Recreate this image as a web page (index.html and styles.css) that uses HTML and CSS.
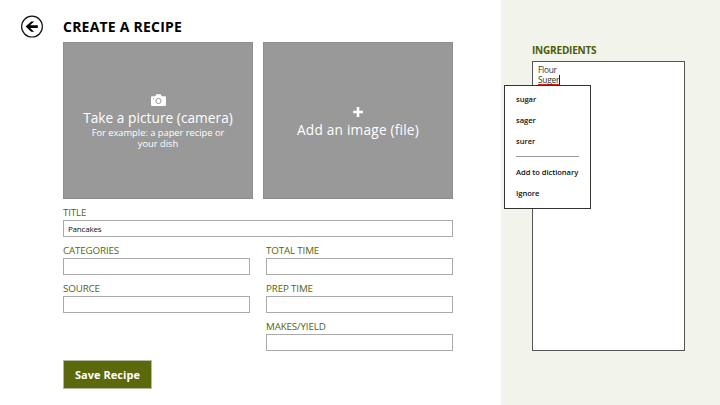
FILE: index.html
```html
<!DOCTYPE html>
<html lang="en">
<head>
<meta charset="utf-8">
<title>Create a recipe</title>
<link rel="stylesheet" href="styles.css">
</head>
<body>
<div class="app">
  <main class="main">
    <header class="header">
      <svg class="back" viewBox="0 0 24 24" width="24" height="24" role="img" aria-label="Back">
        <circle cx="12" cy="11.6" r="10.4" fill="none" stroke="#111" stroke-width="1.2"/>
        <path d="M5.6 11.6 11.2 6.4H14.2L10.1 10.3H17.8V12.9H10.1L14.2 16.8H11.2Z" fill="#000"/>
      </svg>
      <h1 class="page-title">CREATE A RECIPE</h1>
    </header>
    <section class="tiles">
      <div class="tile">
        <svg class="camera" viewBox="0 0 15 13" width="15" height="13">
          <path d="M1.2 2.2H4.3L5.2 .2H9.8L10.7 2.2H13.8Q15 2.2 15 3.4V10.8Q15 12 13.8 12H1.2Q0 12 0 10.8V3.4Q0 2.2 1.2 2.2Z" fill="#fff"/>
          <circle cx="7.5" cy="7" r="2.6" fill="none" stroke="#999" stroke-width="1"/>
          <circle cx="2.6" cy="4.5" r=".6" fill="#999"/>
        </svg>
        <div class="tile-title">Take a picture (camera)</div>
        <div class="tile-note">For example: a paper recipe or</div>
        <div class="tile-note">your dish</div>
      </div>
      <div class="tile tile-file">
        <svg class="plus" viewBox="0 0 10 10" width="10" height="10"><path d="M5 0V10M0 5H10" stroke="#fff" stroke-width="2.6"/></svg>
        <div class="tile-title file-title">Add an image (file)</div>
      </div>
    </section>
    <form class="fields">
      <div class="field wide"><label class="label">TITLE</label><div class="input">Pancakes</div></div>
      <div class="field"><label class="label">CATEGORIES</label><div class="input"></div></div>
      <div class="field"><label class="label">TOTAL TIME</label><div class="input"></div></div>
      <div class="field"><label class="label">SOURCE</label><div class="input"></div></div>
      <div class="field"><label class="label">PREP TIME</label><div class="input"></div></div>
      <div class="field second"><label class="label">MAKES/YIELD</label><div class="input"></div></div>
    </form>
    <button class="save" type="button">Save Recipe</button>
  </main>
  <aside class="panel">
    <h2 class="panel-title">INGREDIENTS</h2>
    <div class="ingredients">
      <div class="line">Flour</div>
      <div class="line"><span class="misspelled">Suger</span></div>
      <div class="menu">
        <div class="item">sugar</div>
        <div class="item">sager</div>
        <div class="item">surer</div>
        <div class="rule"></div>
        <div class="item">Add to dictionary</div>
        <div class="item">Ignore</div>
      </div>
    </div>
  </aside>
</div>
</body>
</html>
```

FILE: styles.css
```css
* { box-sizing: border-box; }
body {
  margin: 0;
  background: #fff;
  color: #111;
  font-family: "Open Sans", "Noto Sans", sans-serif;
}
.app { display: flex; width: 720px; height: 405px; overflow: hidden; }
.main { width: 501px; padding: 15px 0 0 63px; }
.header { display: flex; align-items: center; height: 24px; margin-left: -43px; gap: 19px; }
.back { flex: none; }
.page-title { margin: 0; font-size: 14px; line-height: 24px; font-weight: 700; color: #000; letter-spacing: .22px; white-space: nowrap; }
.tiles { display: flex; gap: 10px; margin-top: 3px; width: 390px; }
.tile {
  flex: 1;
  height: 157px;
  padding-top: 51px;
  display: flex;
  flex-direction: column;
  align-items: center;
  background: #999;
  border: 1px solid #8e8e8e;
  color: #fff;
  text-align: center;
  white-space: nowrap;
}
.tile-file { padding-top: 64px; }
.tile-title { font-size: 13.7px; line-height: 18px; margin-top: 2px; letter-spacing: .03px; }
.file-title { margin-top: 4px; letter-spacing: .2px; }
.tile-note { font-size: 9.3px; line-height: 11px; }
.fields {
  display: grid;
  grid-template-columns: 187px 187px;
  column-gap: 16px;
  row-gap: 4px;
  margin-top: 4px;
  width: 390px;
}
.field { height: 34px; }
.wide { grid-column: 1 / 3; }
.second { grid-column: 2; }
.label { display: block; height: 17px; font-size: 9.8px; line-height: 19px; letter-spacing: -.15px; color: #56650c; white-space: nowrap; }
.input { height: 17px; border: 1px solid #aaa; background: #fff; padding-left: 4px; font-size: 8px; line-height: 16px; letter-spacing: -.2px; }
.save {
  display: block;
  width: 89px;
  height: 29px;
  margin-top: 9px;
  padding: 0;
  border: 1px solid #b7b9a3;
  background: #5b680b;
  color: #fff;
  font: 700 11px/26px "Open Sans", "Noto Sans", sans-serif;
  letter-spacing: .05px;
  white-space: nowrap;
}
.panel { flex: 1; background: #f2f3eb; padding: 42px 0 0 31px; }
.panel-title { margin: 0; font-size: 10px; line-height: 16px; font-weight: 700; letter-spacing: -.2px; color: #4d5c08; height: 19px; }
.ingredients {
  position: relative;
  width: 153px;
  height: 290px;
  padding: 3px 5px;
  background: #fff;
  border: 1px solid #555;
  font-size: 8.4px;
  letter-spacing: -.25px;
  color: #333;
}
.line { height: 10px; line-height: 10px; white-space: nowrap; }
.misspelled { display: block; width: 22px; height: 10px; border-right: 1px solid #222; border-bottom: 1px solid #e02020; }
.menu {
  position: absolute;
  left: -29px;
  top: 23px;
  width: 87px;
  height: 124px;
  padding: 3px 11px;
  background: #fff;
  border: 1px solid #333;
  color: #111;
  font-size: 7.6px;
  font-weight: 600;
  letter-spacing: -.05px;
  white-space: nowrap;
}
.item { height: 21px; line-height: 20px; }
.rule { height: 1px; margin: 4px 0 5px; background: #999; }
```
